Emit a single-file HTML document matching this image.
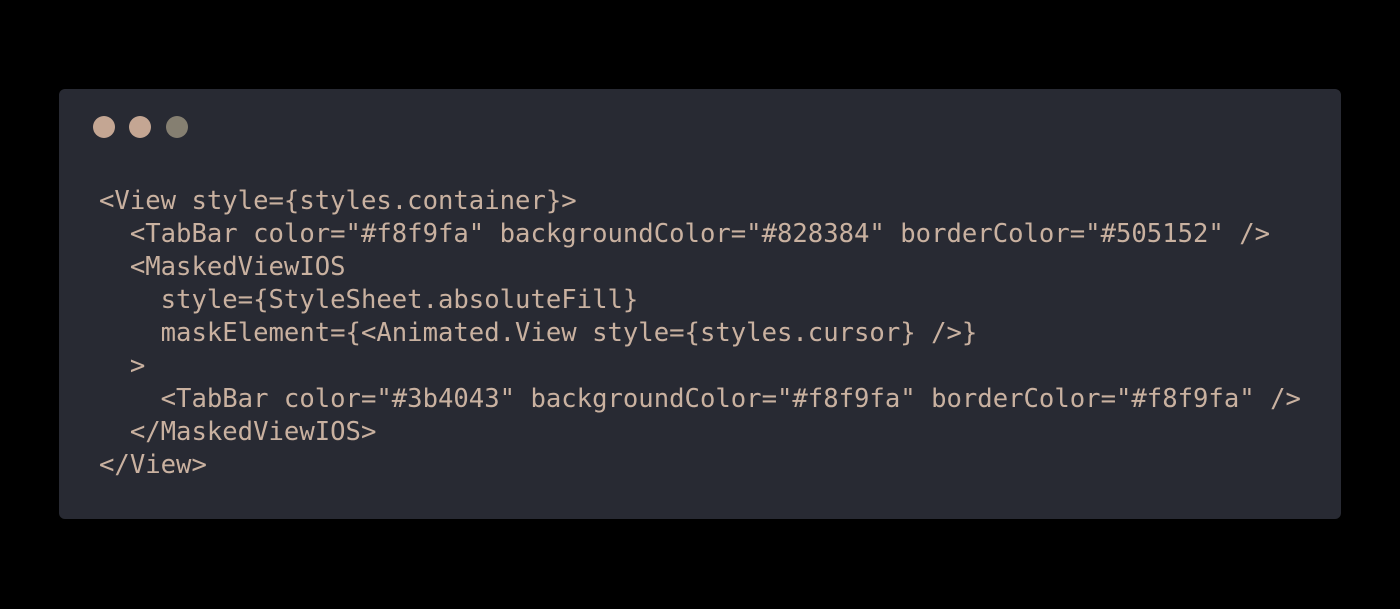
<!DOCTYPE html>
<html><head><meta charset="utf-8"><style>
html,body{margin:0;padding:0;background:#000;width:1400px;height:609px;overflow:hidden}
.card{position:absolute;left:59px;top:89px;width:1282px;height:430px;background:#282a33;border-radius:6px}
.dot{position:absolute;top:116px;width:22px;height:22px;border-radius:50%}
pre{position:absolute;left:99px;top:185px;margin:0;font-family:"DejaVu Sans Mono","Liberation Mono",monospace;font-size:25.6px;line-height:33px;color:#c9b1a0}
</style></head><body>
<div class="card"></div>
<div class="dot" style="left:93px;background:#c4a693"></div>
<div class="dot" style="left:129px;background:#c4a693"></div>
<div class="dot" style="left:166px;background:#857f71"></div>
<pre>&lt;View style={styles.container}&gt;
  &lt;TabBar color="#f8f9fa" backgroundColor="#828384" borderColor="#505152" /&gt;
  &lt;MaskedViewIOS
    style={StyleSheet.absoluteFill}
    maskElement={&lt;Animated.View style={styles.cursor} /&gt;}
  &gt;
    &lt;TabBar color="#3b4043" backgroundColor="#f8f9fa" borderColor="#f8f9fa" /&gt;
  &lt;/MaskedViewIOS&gt;
&lt;/View&gt;</pre>
</body></html>
